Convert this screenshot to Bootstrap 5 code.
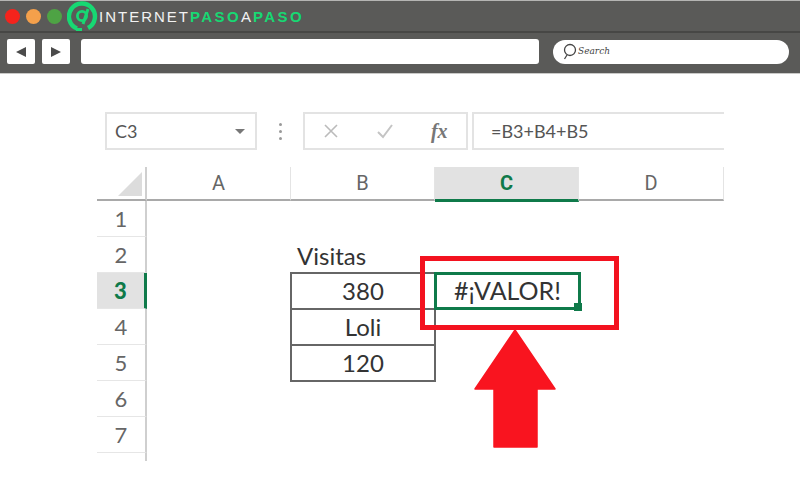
<!DOCTYPE html>
<html lang="en">
<head>
  <meta charset="UTF-8" />
  <meta name="viewport" content="width=device-width, initial-scale=1.0" />
  <title>#¡VALOR!</title>
  <link href="https://cdn.jsdelivr.net/npm/bootstrap@5.3.0/dist/css/bootstrap.min.css" rel="stylesheet">
  <style>
    html, body { width: 800px; height: 500px; overflow: hidden; background: #fff; }
    body { position: relative; font-family: "Lato", "Liberation Sans", sans-serif; color: #333; }

    /* browser frame */
    .frame { background: #5a5a58; height: 74px; border-top: 1px solid #b5b5b3; border-bottom: 1px solid #c9c9c7; }
    .frame-top { height: 32px; padding-left: 5px; gap: 6px; border-bottom: 2px solid #474745; }
    .dot { width: 15px; height: 15px; border-radius: 50%; }
    .dot-red { background: #f5231c; }
    .dot-orange { background: #f4a04b; }
    .dot-green { background: #4ea344; }
    .logo-mark { margin-left: -1px; }
    .logo-text { font-family: "Liberation Sans", sans-serif; font-size: 15px; letter-spacing: 2px; color: #f2f2f2; margin-left: -6px; white-space: nowrap; line-height: 1; }
    .logo-text b { font-weight: 700; color: #17d873; letter-spacing: 2.4px; }
    .frame-bar { height: 38px; padding: 6px 11px 7px 7px; }
    .nav-key { width: 28px; height: 25px; background: #fff; border-radius: 2px; }
    .nav-next { margin-left: 7px; }
    .url-box { width: 458px; height: 25px; background: #fff; border-radius: 3px; margin-left: 11px; }
    .search-box { width: 236px; height: 24px; background: #fff; border-radius: 12px; margin-left: 14px; padding-left: 9px; }
    .search-txt { font-family: "DejaVu Serif", serif; font-style: italic; font-size: 9px; color: #444; margin-left: 1px; }

    /* excel formula row */
    .sheet-wrap { padding: 38px 0 0 97px; }
    .formula-row { height: 38px; padding-left: 8px; width: 627px; }
    .xl-box { height: 38px; border: 2px solid #e3e3e3; background: #fff; }
    .name-box { width: 152px; padding: 0 10px 0 8px; font-size: 18px; color: #555; }
    .caret-down { width: 0; height: 0; border-left: 5px solid transparent; border-right: 5px solid transparent; border-top: 5px solid #777; }
    .grip { width: 46px; }
    .grip i { display: block; width: 3px; height: 3px; margin: 2px 0; border-radius: 50%; background: #999; }
    .fx-box { width: 165px; color: #aaa; }
    .fx-txt { font-family: "Liberation Serif", serif; font-style: italic; font-weight: 700; font-size: 20px; color: #777; }
    .fx-input { flex: 1; margin-left: 4px; border-right: 0; padding-left: 17px; font-size: 18px; color: #555; }

    /* excel grid */
    .xl-grid { display: grid; grid-template-columns: 50px 144px 144px 144px 145px; grid-template-rows: 34px; grid-auto-rows: 36px; margin-top: 17px; width: 627px; }
    .col-head { height: 34px; align-self: start; font-family: "Roboto", sans-serif; font-size: 20px; color: #666; border-right: 1px solid #e4e4e4; border-bottom: 2px solid #a9a9a9; }
    .corner { border-right: 2px solid #cfcfcf; padding: 6px 3px 3px 0; justify-content: flex-end; }
    .col-on { background: #e2e2e2; color: #0f7a4a; font-weight: 700; border-bottom: 3px solid #0f7a4a; height: 35px; }
    .row-head { font-size: 22px; color: #666; border-bottom: 1px solid #e6e6e6; border-right: 2px solid #cfcfcf; }
    .row-on { background: #e2e2e2; color: #0f7a4a; font-weight: 900; border-right: 3px solid #0f7a4a; }
    .xl-cell { font-size: 24px; color: #333; }
    .xl-label { align-items: flex-end; padding: 0 0 2px 6px; line-height: 1.2; }
    .xl-val { border: 2px solid #666; margin: -1px; }
    .xl-sel { font-size: 25px; border: 3px solid #0f7a4a; margin: -1px -2px -1px -1px; position: relative; z-index: 1; background: #fff; }
    .sel-grab { position: absolute; right: -4px; bottom: -4px; width: 8px; height: 8px; background: #0f7a4a; }
    .col-span { grid-column: 2 / 6; }
    .row-tail { width: 50px; height: 8px; border-right: 2px solid #cfcfcf; }

    /* callouts laid over the sheet */
    .red-frame { position: absolute; left: 420px; top: 256px; width: 199px; height: 74px; border: 5px solid #f3121f; z-index: 2; }
    .red-arrow { position: absolute; left: 474px; top: 329px; z-index: 2; }
  </style>
</head>
<body>
  <div class="frame">
    <div class="frame-top d-flex align-items-center">
      <span class="dot dot-red"></span>
      <span class="dot dot-orange"></span>
      <span class="dot dot-green"></span>
      <svg class="logo-mark" width="32" height="32" viewBox="0 0 32 32" fill="none" stroke="#17d873">
        <path d="M10 28.5 A13 13 0 1 1 21 28" stroke-width="4.4"/>
        <path d="M9 29.5 L15 29.5" stroke-width="3"/>
        <circle cx="15" cy="16" r="4.6" stroke-width="2.8"/>
        <path d="M21 9 L16 24" stroke-width="3"/>
      </svg>
      <span class="logo-text">INTERNET<b>PASO</b>A<b>PASO</b></span>
    </div>
    <div class="frame-bar d-flex align-items-center">
      <div class="nav-key d-flex align-items-center justify-content-center">
        <svg width="12" height="12" viewBox="0 0 12 12"><path d="M1 6 L11 1 V11 Z" fill="#4b4b4b"/></svg>
      </div>
      <div class="nav-key nav-next d-flex align-items-center justify-content-center">
        <svg width="12" height="12" viewBox="0 0 12 12"><path d="M11 6 L1 1 V11 Z" fill="#4b4b4b"/></svg>
      </div>
      <div class="url-box"></div>
      <div class="search-box d-flex align-items-center">
        <svg width="15" height="17" viewBox="0 0 15 17" fill="none" stroke="#444" stroke-width="1.3">
          <circle cx="8" cy="7" r="5.5"/><path d="M5 12 L2.5 16"/>
        </svg>
        <span class="search-txt">Search</span>
      </div>
    </div>
  </div>

  <div class="sheet-wrap">
    <div class="formula-row d-flex">
      <div class="xl-box name-box d-flex align-items-center justify-content-between">
        <span>C3</span><span class="caret-down"></span>
      </div>
      <div class="grip d-flex flex-column align-items-center justify-content-center"><i></i><i></i><i></i></div>
      <div class="xl-box fx-box d-flex align-items-center justify-content-around">
        <svg width="16" height="16" viewBox="0 0 16 16" fill="none" stroke="#bbb" stroke-width="1.6"><path d="M2 2 L14 14 M14 2 L2 14"/></svg>
        <svg width="18" height="16" viewBox="0 0 18 16" fill="none" stroke="#c4c4c4" stroke-width="2"><path d="M2 9 L7 14 L16 2"/></svg>
        <span class="fx-txt">fx</span>
      </div>
      <div class="xl-box fx-input d-flex align-items-center">=B3+B4+B5</div>
    </div>

    <div class="xl-grid">
      <div class="col-head corner d-flex align-items-end">
        <svg width="24" height="24" viewBox="0 0 24 24"><path d="M24 0 V24 H0 Z" fill="#dcdcdc"/></svg>
      </div>
      <div class="col-head d-flex align-items-center justify-content-center">A</div>
      <div class="col-head d-flex align-items-center justify-content-center">B</div>
      <div class="col-head col-on d-flex align-items-center justify-content-center">C</div>
      <div class="col-head d-flex align-items-center justify-content-center">D</div>

      <div class="row-head d-flex align-items-center justify-content-center">1</div>
      <div class="col-span"></div>

      <div class="row-head d-flex align-items-center justify-content-center">2</div>
      <div></div>
      <div class="xl-cell xl-label d-flex">Visitas</div>
      <div></div><div></div>

      <div class="row-head row-on d-flex align-items-center justify-content-center">3</div>
      <div></div>
      <div class="xl-cell xl-val d-flex align-items-center justify-content-center">380</div>
      <div class="xl-cell xl-sel d-flex align-items-center justify-content-center">#¡VALOR!<span class="sel-grab"></span></div>
      <div></div>

      <div class="row-head d-flex align-items-center justify-content-center">4</div>
      <div></div>
      <div class="xl-cell xl-val d-flex align-items-center justify-content-center">Loli</div>
      <div></div><div></div>

      <div class="row-head d-flex align-items-center justify-content-center">5</div>
      <div></div>
      <div class="xl-cell xl-val d-flex align-items-center justify-content-center">120</div>
      <div></div><div></div>

      <div class="row-head d-flex align-items-center justify-content-center">6</div>
      <div class="col-span"></div>

      <div class="row-head d-flex align-items-center justify-content-center">7</div>
      <div class="col-span"></div>
    </div>
    <div class="row-tail"></div>
  </div>

  <div class="red-frame"></div>
  <svg class="red-arrow" width="84" height="120" viewBox="0 0 84 120">
    <path d="M41 1 L81 60 H63 V118 H20 V60 H1 Z" fill="#f9141f" stroke="#f9141f" stroke-width="1.5" stroke-linejoin="round"/>
  </svg>

  <script src="https://cdn.jsdelivr.net/npm/bootstrap@5.3.0/dist/js/bootstrap.bundle.min.js"></script>
</body>
</html>
